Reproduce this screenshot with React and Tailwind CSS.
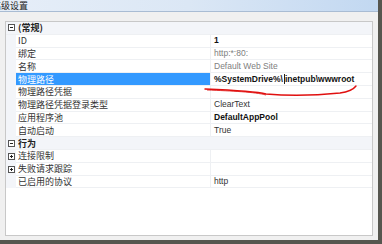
import React from 'react';

const FONT = { fontFamily: '"Noto Sans CJK SC", "Liberation Sans", sans-serif' };
const LATIN = { fontFamily: '"Liberation Sans", "Noto Sans CJK SC", sans-serif' };

// 属性网格里的每一行
const ROWS = [
    { type: 'cat', name: '(常规)', open: true },
    { name: 'ID', value: '1', bold: true },
    { name: '绑定', value: 'http:*:80:', dim: true },
    { name: '名称', value: 'Default Web Site', dim: true },
    { name: '物理路径', value: 'path', bold: true, selected: true },
    { name: '物理路径凭据', value: '' },
    { name: '物理路径凭据登录类型', value: 'ClearText' },
    { name: '应用程序池', value: 'DefaultAppPool', bold: true },
    { name: '自动启动', value: 'True' },
    { type: 'cat', name: '行为', open: true },
    { name: '连接限制', value: '', expander: true },
    { name: '失败请求跟踪', value: '', expander: true },
    { name: '已启用的协议', value: 'http' },
];

const Toggle = ({ open }) => (
    <svg width="7" height="7" viewBox="0 0 7 7" className="shrink-0">
        <rect x="0.5" y="0.5" width="6" height="6" fill="#fff" stroke="#555" strokeWidth="1" />
        <line x1="2" y1="3.5" x2="5" y2="3.5" stroke="#222" strokeWidth="1" />
        {!open && <line x1="3.5" y1="2" x2="3.5" y2="5" stroke="#222" strokeWidth="1" />}
    </svg>
);

const Row = ({ row }) => {
    if (row.type === 'cat') {
        return (
            <div className="flex h-[12.8px] items-center bg-[#f3f5f9] border-b border-[#eef0f3]">
                <div className="w-[10px] flex justify-center"><Toggle open={row.open} /></div>
                <span className="pl-[2px] text-[9px] font-bold text-[#222] leading-none">{row.name}</span>
            </div>
        );
    }
    const value = row.value === 'path'
        ? <>{'%SystemDrive%\\'}<span className="inline-block w-px h-[10px] bg-[#222] align-middle ml-[1px]" />{'inetpub\\wwwroot'}</>
        : row.value;
    return (
        <div className="flex h-[12.8px]">
            <div className="w-[10px] bg-[#f3f5f9] flex items-center justify-center">
                {row.expander && <Toggle open={false} />}
            </div>
            <div className={`w-[195px] flex items-center pl-[2px] border-b border-r border-[#eef0f3] text-[9px] leading-none ${row.selected ? 'bg-[#3399ff] text-white' : 'text-[#333]'}`}>
                {row.name}
            </div>
            <div style={LATIN} className={`flex-1 flex items-center pl-[3px] border-b border-[#eef0f3] text-[8.5px] leading-none whitespace-nowrap ${row.bold ? 'font-bold text-[#111]' : row.dim ? 'text-[#808080]' : 'text-[#333]'}`}>
                {value}
            </div>
        </div>
    );
};

export default function App() {
    return (
        <div className="w-[382px] h-[244px] bg-[#56564f] overflow-hidden" style={FONT}>
            <div className="w-[378px] h-[240px] bg-[#f0f0f0] flex flex-col relative">
                <div className="h-[12px] bg-gradient-to-r from-[#e6eef8] via-[#dbe7f5] to-[#c2d8f1] border-b border-[#a9bcd3] flex items-center overflow-hidden">
                    <span className="ml-[-8px] text-[9px] text-[#222] leading-none whitespace-nowrap">高级设置</span>
                </div>
                <div className="h-[9px]" />
                <div className="flex-1 ml-[5px] mr-[5px] mb-[4px] border border-[#c8c8c8] bg-white">
                    {ROWS.map((row, i) => <Row key={i} row={row} />)}
                </div>
                {/* 红色手绘下划线 */}
                <svg className="absolute left-0 top-0 pointer-events-none" width="378" height="240">
                    <path d="M205 89 C 230 90, 255 91, 266 94 C 290 96, 320 95, 340 93 C 348 92, 353 90, 356 86"
                        fill="none" stroke="#e01010" strokeWidth="1.4" strokeLinecap="round" />
                    <path d="M207 90 C 232 91, 255 92, 266 95" fill="none" stroke="#e01010" strokeWidth="0.8" />
                </svg>
            </div>
        </div>
    );
}
